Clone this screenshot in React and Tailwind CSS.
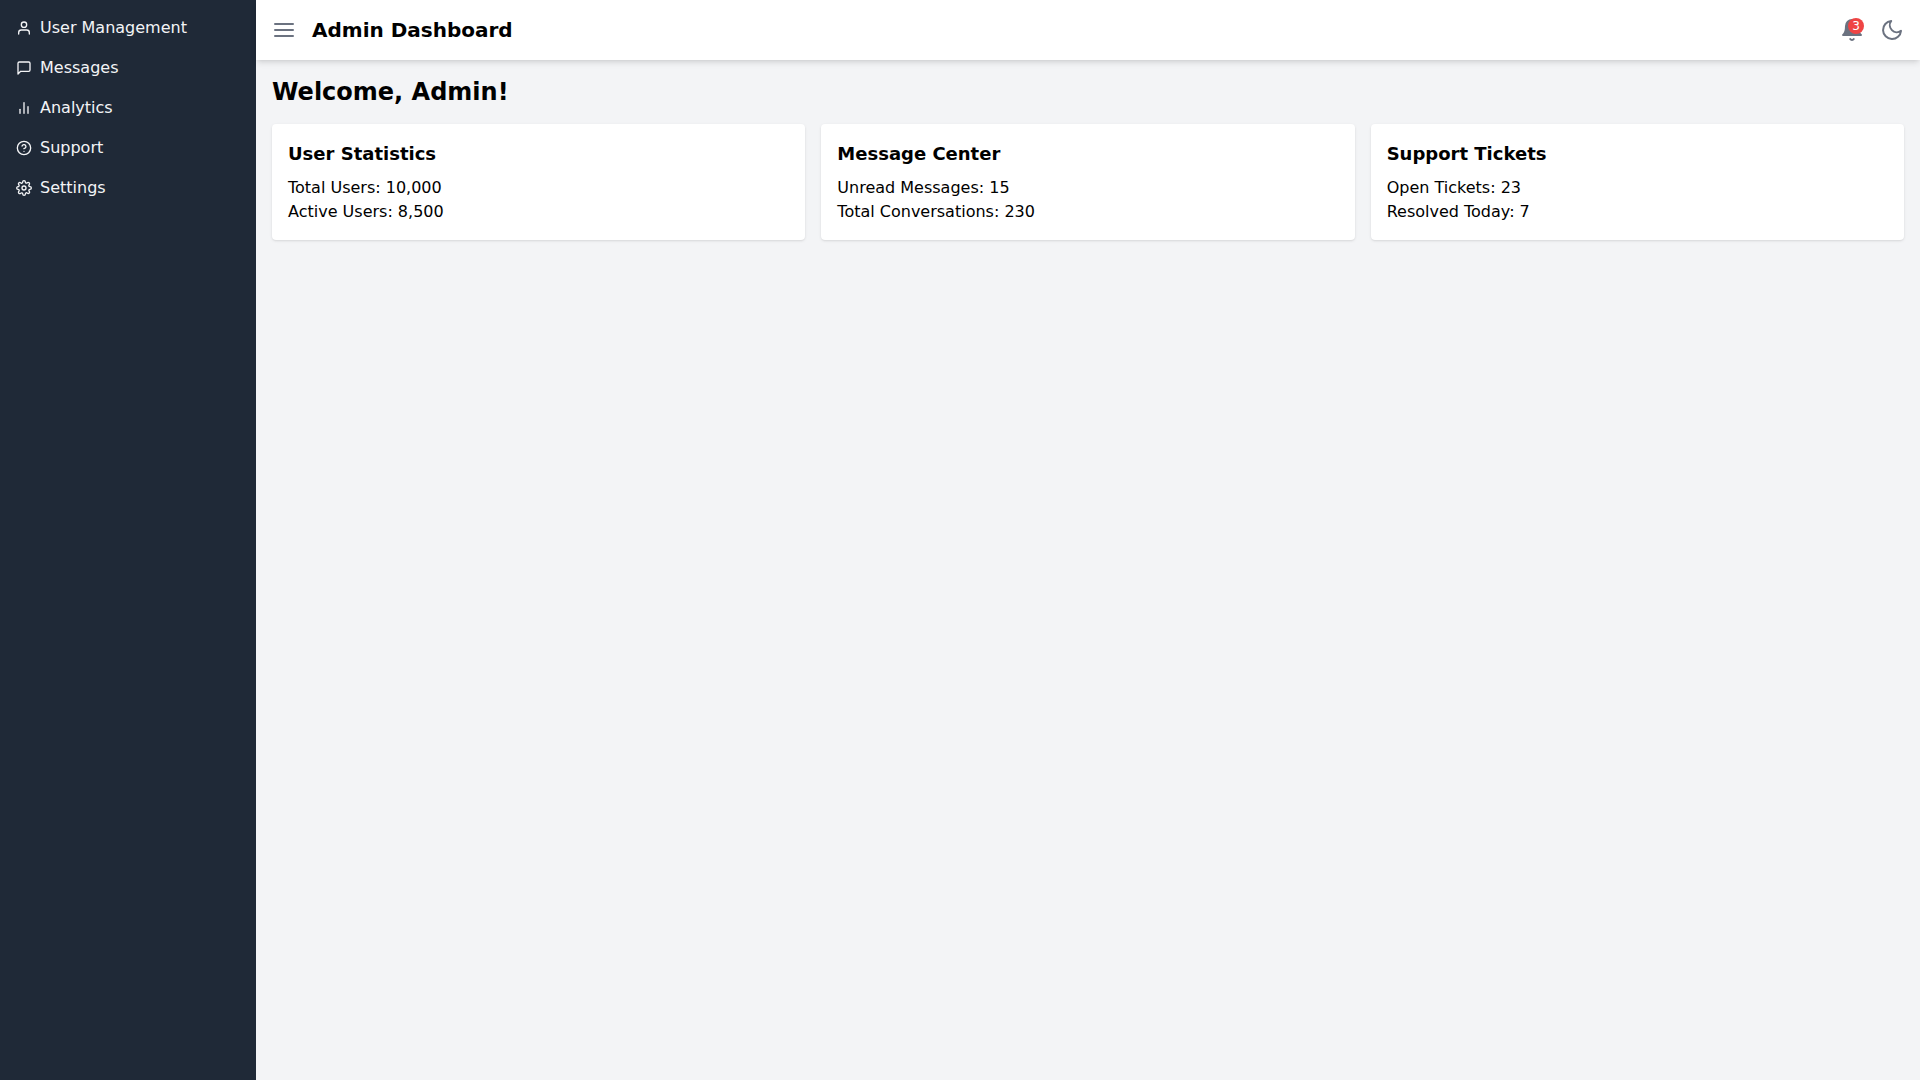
import React from 'react';
import { FiUser, FiMessageSquare, FiBarChart2, FiHelpCircle, FiSettings, FiMenu, FiBell, FiMoon } from 'react-icons/fi';

const navItems = [
  { label: 'User Management', icon: FiUser },
  { label: 'Messages', icon: FiMessageSquare },
  { label: 'Analytics', icon: FiBarChart2 },
  { label: 'Support', icon: FiHelpCircle },
  { label: 'Settings', icon: FiSettings },
];

const cards = [
  { title: 'User Statistics', lines: ['Total Users: 10,000', 'Active Users: 8,500'] },
  { title: 'Message Center', lines: ['Unread Messages: 15', 'Total Conversations: 230'] },
  { title: 'Support Tickets', lines: ['Open Tickets: 23', 'Resolved Today: 7'] },
];

const App = () => {
  return (
    <div className="flex h-screen overflow-hidden bg-[#f3f4f6] font-['DejaVu_Sans',sans-serif] text-black">
      <aside className="w-64 shrink-0 bg-[#1f2937] py-2 text-[#f3f4f6]">
        <nav>
          {navItems.map(({ label, icon: Icon }) => (
            <a key={label} className="flex items-center gap-2 px-4 py-2">
              <Icon className="w-4 h-4" />
              <span>{label}</span>
            </a>
          ))}
        </nav>
      </aside>
      <div className="flex flex-1 flex-col">
        <header className="flex h-[60px] items-center justify-between bg-white px-4 shadow-md">
          <div className="flex items-center gap-4">
            <FiMenu className="w-6 h-6 text-[#6b7280]" />
            <h1 className="text-xl font-bold">Admin Dashboard</h1>
          </div>
          <div className="flex items-center gap-4">
            <div className="relative">
              <FiBell className="w-6 h-6 text-[#6b7280]" fill="currentColor" />
              <span className="absolute right-0 top-0 flex h-4 w-4 items-center justify-center rounded-full bg-[#ef4444] text-xs text-white">3</span>
            </div>
            <FiMoon className="w-6 h-6 text-[#6b7280]" />
          </div>
        </header>
        <main className="p-4">
          <h2 className="mb-4 text-2xl font-bold">Welcome, Admin!</h2>
          <div className="grid grid-cols-3 gap-4">
            {cards.map((card) => (
              <div key={card.title} className="rounded bg-white p-4 shadow">
                <h3 className="mb-2 text-lg font-bold">{card.title}</h3>
                {card.lines.map((line) => (
                  <p key={line}>{line}</p>
                ))}
              </div>
            ))}
          </div>
        </main>
      </div>
    </div>
  );
};

export default App;
